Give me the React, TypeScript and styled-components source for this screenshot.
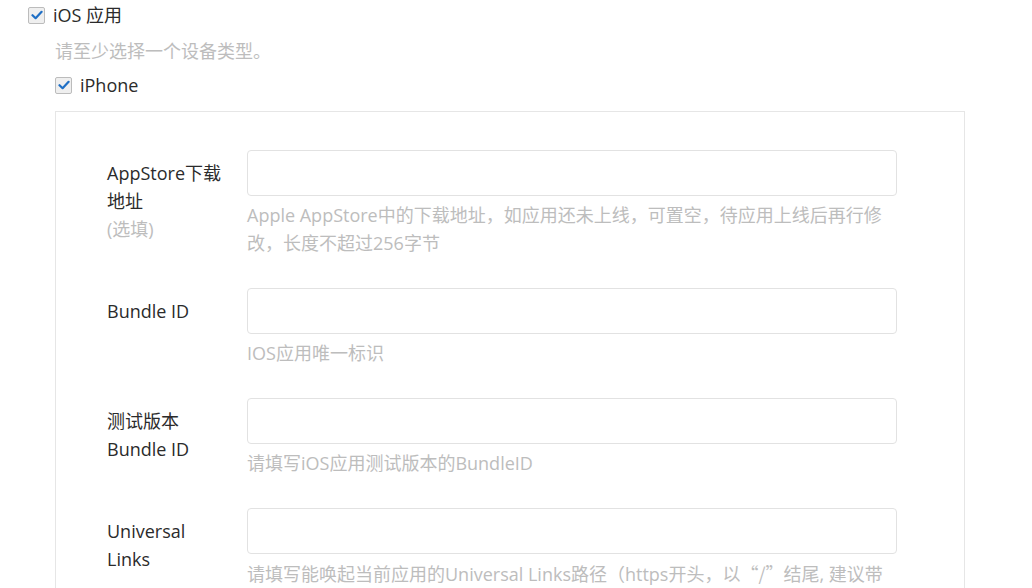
import React from 'react';
import styled, { createGlobalStyle } from 'styled-components';

const GlobalStyle = createGlobalStyle`
  html, body {
    margin: 0;
    padding: 0;
    background: #fff;
  }
  body {
    font-family: "Open Sans", "Noto Sans CJK SC", sans-serif;
    font-size: 18px;
    color: #333;
  }
`;

const Page = styled.div`
  padding: 1px 0 0 28px;
`;

const CheckRow = styled.label<{ $tight?: boolean }>`
  display: flex;
  align-items: center;
  gap: 8px;
  height: 28px;
  line-height: 28px;
  color: #2b2b2b;
  margin-top: ${(p) => (p.$tight ? '6px' : '0')};
`;

const Box = styled.span`
  width: 17px;
  height: 17px;
  box-sizing: border-box;
  border: 1px solid #bcbcbc;
  border-radius: 2px;
  background: #efefef;
  display: inline-flex;
  align-items: center;
  justify-content: center;
  flex: none;
`;

const Sub = styled.div`
  margin-left: 27px;
`;

const Hint = styled.div`
  margin-top: 8px;
  line-height: 28px;
  color: #bdbdbd;
`;

const Panel = styled.div`
  margin-top: 12px;
  width: 910px;
  box-sizing: border-box;
  border: 1px solid #e6e6e6;
  padding: 38px 0 20px 51px;
`;

const FormRow = styled.div`
  display: flex;
  align-items: flex-start;
  margin-bottom: 31px;
`;

const Label = styled.div`
  width: 120px;
  margin-right: 20px;
  padding-top: 9px;
  line-height: 28px;
  color: #2b2b2b;
  word-break: break-all;
`;

const Optional = styled.span`
  display: block;
  color: #bdbdbd;
`;

const Control = styled.div`
  width: 650px;
`;

const Input = styled.input`
  display: block;
  width: 650px;
  height: 46px;
  box-sizing: border-box;
  border: 1px solid #e2e2e2;
  border-radius: 4px;
  outline: none;
  padding: 0 12px;
  font: inherit;
`;

const Help = styled.div`
  margin-top: 5px;
  max-width: 640px;
  line-height: 28px;
  color: #bdbdbd;
`;

const Quote = styled.span`
  font-family: "Noto Sans CJK SC", sans-serif;
`;

interface Field {
  label: React.ReactNode;
  help: React.ReactNode;
}

const fields: Field[] = [
  {
    label: (
      <>
        AppStore下载地址
        <Optional>(选填)</Optional>
      </>
    ),
    help: 'Apple AppStore中的下载地址，如应用还未上线，可置空，待应用上线后再行修改，长度不超过256字节',
  },
  { label: 'Bundle ID', help: 'IOS应用唯一标识' },
  {
    label: (
      <>
        测试版本
        <br />
        Bundle ID
      </>
    ),
    help: '请填写iOS应用测试版本的BundleID',
  },
  {
    label: (
      <>
        Universal
        <br />
        Links
      </>
    ),
    help: (
      <>
        请填写能唤起当前应用的Universal Links路径（https开头，以<Quote>“/”</Quote>结尾, 建议带上应用专属路径）
      </>
    ),
  },
];

function Check() {
  return (
    <Box>
      <svg width="12" height="10" viewBox="0 0 12 10">
        <path d="M1.5 5.2 L4.6 8.2 L10.6 1.8" fill="none" stroke="#1f6fc5" strokeWidth="2.2" strokeLinecap="round" strokeLinejoin="round" />
      </svg>
    </Box>
  );
}

export default function App() {
  return (
    <>
      <GlobalStyle />
      <Page>
        <CheckRow>
          <Check />
          <span>iOS 应用</span>
        </CheckRow>
        <Sub>
          <Hint>请至少选择一个设备类型。</Hint>
          <CheckRow $tight>
            <Check />
            <span>iPhone</span>
          </CheckRow>
          <Panel>
            {fields.map((f, i) => (
              <FormRow key={i}>
                <Label>{f.label}</Label>
                <Control>
                  <Input type="text" />
                  <Help>{f.help}</Help>
                </Control>
              </FormRow>
            ))}
          </Panel>
        </Sub>
      </Page>
    </>
  );
}
